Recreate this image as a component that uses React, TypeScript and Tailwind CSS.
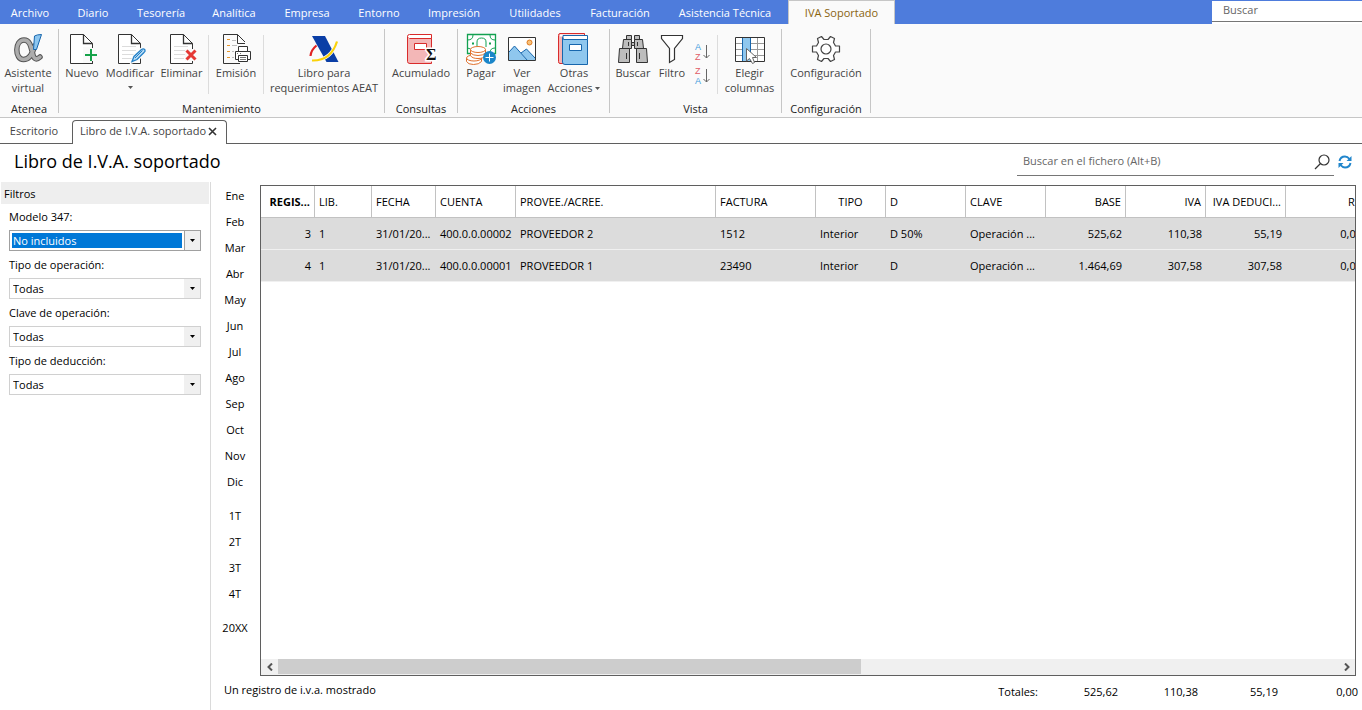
import type { ReactNode } from 'react';

const menuTabs = [
  { label: 'Archivo', width: 'w-[60px]' },
  { label: 'Diario', width: 'w-[66px]' },
  { label: 'Tesorería', width: 'w-[70px]' },
  { label: 'Analítica', width: 'w-[76px]' },
  { label: 'Empresa', width: 'w-[70px]' },
  { label: 'Entorno', width: 'w-[74px]' },
  { label: 'Impresión', width: 'w-[76px]' },
  { label: 'Utilidades', width: 'w-[86px]' },
  { label: 'Facturación', width: 'w-[84px]' },
  { label: 'Asistencia Técnica', width: 'w-[126px]' },
];

const filters = [
  { id: 'modelo', label: 'Modelo 347:', value: 'No incluidos', active: true },
  { id: 'operacion', label: 'Tipo de operación:', value: 'Todas', active: false },
  { id: 'clave', label: 'Clave de operación:', value: 'Todas', active: false },
  { id: 'deduccion', label: 'Tipo de deducción:', value: 'Todas', active: false },
];

const months = ['Ene', 'Feb', 'Mar', 'Abr', 'May', 'Jun', 'Jul', 'Ago', 'Sep', 'Oct', 'Nov', 'Dic'];
const quarters = ['1T', '2T', '3T', '4T'];

const columns = [
  { label: 'REGIS...', col: 'w-[54px]', head: 'text-right font-bold', cell: 'text-right' },
  { label: 'LIB.', col: 'w-[57px]', head: 'text-left font-normal', cell: 'text-left' },
  { label: 'FECHA', col: 'w-[64px]', head: 'text-left font-normal', cell: 'text-left' },
  { label: 'CUENTA', col: 'w-[80px]', head: 'text-left font-normal', cell: 'text-left' },
  { label: 'PROVEE./ACREE.', col: 'w-[200px]', head: 'text-left font-normal', cell: 'text-left' },
  { label: 'FACTURA', col: 'w-[100px]', head: 'text-left font-normal', cell: 'text-left' },
  { label: 'TIPO', col: 'w-[70px]', head: 'text-center font-normal', cell: 'text-left' },
  { label: 'D', col: 'w-[80px]', head: 'text-left font-normal', cell: 'text-left' },
  { label: 'CLAVE', col: 'w-[80px]', head: 'text-left font-normal', cell: 'text-left' },
  { label: 'BASE', col: 'w-[80px]', head: 'text-right font-normal', cell: 'text-right' },
  { label: 'IVA', col: 'w-[80px]', head: 'text-right font-normal', cell: 'text-right' },
  { label: 'IVA DEDUCI...', col: 'w-[80px]', head: 'text-right font-normal', cell: 'text-right' },
  { label: 'RE', col: 'w-[80px]', head: 'text-right font-normal', cell: 'text-right' },
];

const rows = [
  ['3', '1', '31/01/20...', '400.0.0.00002', 'PROVEEDOR 2', '1512', 'Interior', 'D 50%', 'Operación ...', '525,62', '110,38', '55,19', '0,00'],
  ['4', '1', '31/01/20...', '400.0.0.00001', 'PROVEEDOR 1', '23490', 'Interior', 'D', 'Operación ...', '1.464,69', '307,58', '307,58', '0,00'],
];

const totals = ['Totales:', '525,62', '110,38', '55,19', '0,00'];

function Icon({ children }: { children: ReactNode }) {
  return (
    <svg viewBox="0 0 32 32" className="block h-8 w-8 shrink-0 overflow-visible" fill="none" aria-hidden="true">
      {children}
    </svg>
  );
}

function Sheet({ lined = false }: { lined?: boolean }) {
  return (
    <>
      <path d="M17.5 1.5H4.5V30.5H26.5V10.5L17.5 1.5Z" fill="#fff" stroke="#333" />
      <path d="M17.5 1.5V10.5H26.5" stroke="#333" strokeWidth="1.3" />
      {lined && <path d="M8 13.5H22M8 17.5H22M8 21.5H20M8 25.5H18" stroke="#dcdcdc" />}
    </>
  );
}

function AlphaIcon() {
  const loop = 'M22.5 13C20 23 16.500 26.500 11.500 26.500C2.500 26.500 2.500 7 12 7C18 7 19 14 20.500 20C21.500 25 23.500 28 28 24';
  return (
    <Icon>
      <path d={loop} stroke="#555" strokeWidth="5.500" strokeLinecap="round" />
      <path d={loop} stroke="#adadad" strokeWidth="3.500" strokeLinecap="round" />
      <path d="M22.500 3Q25 1.500 29.500 1.500L24.500 16.500H21.500Z" fill="#8cc6f0" stroke="#1766ad" />
    </Icon>
  );
}

function NewIcon() {
  return (
    <Icon>
      <Sheet />
      <path d="M17 14H31V30H17Z" fill="#fafafa" />
      <path d="M5 14H17V30H5Z" fill="#fff" />
      <path d="M26.5 11V15M17 30.5H26.5V28" stroke="#333" />
      <path d="M25 16V28M19 22H31" stroke="#16a34a" strokeWidth="2" />
    </Icon>
  );
}

function EditIcon() {
  return (
    <Icon>
      <Sheet lined />
      <path d="M18 29L20 23L27.500 16Q29.500 15 31 17Q31.500 18.500 30 20L23 27Z" fill="#fff" stroke="#fafafa" strokeWidth="3" />
      <path d="M18 28.500L20 23.500L27.500 16.500Q29.500 15 31 17Q31.500 18.500 30 19.500L23 26.500Z" fill="#b9dcf5" stroke="#2481c8" strokeWidth="1.300" />
      <path d="M21 25L28.500 17.500" stroke="#2481c8" />
    </Icon>
  );
}

function DeleteIcon() {
  return (
    <Icon>
      <Sheet lined />
      <path d="M19 16H31V28H19Z" fill="#fafafa" />
      <path d="M20.500 17.500L29.500 26.500M29.500 17.500L20.500 26.500" stroke="#e53935" strokeWidth="3" />
    </Icon>
  );
}

function PrintIcon() {
  return (
    <Icon>
      <path d="M17.500 1.500H3.500V30.500H20M17.500 1.500V10.500H25M17.500 1.500L25 9" stroke="#333" />
      <path d="M12 7.500H16M12 12.500H17M12 18.500H14M12 24.500H14" stroke="#bbb" />
      <path d="M7 6.500H10M7 12.500H10M7 18.500H10M7 24.500H10" stroke="#e8962a" />
      <path d="M15.500 18.500H30.500V26.500H15.500Z" fill="#fff" stroke="#333" />
      <path d="M18.500 13.500H27.500V18.500H18.500ZM18.500 22.500H27.500V28.500H18.500Z" fill="#fff" stroke="#333" />
      <path d="M20 24.500H26M20 26.500H26M17 20.500H18M20 20.500H21" stroke="#777" />
    </Icon>
  );
}

function AeatIcon() {
  return (
    <Icon>
      <path d="M8.500 12.500Q3 17 2.500 23" stroke="#e02424" strokeWidth="2.200" />
      <path d="M4 3H17L30.500 29H18.500Z" fill="#0a3ea6" />
      <path d="M4 27.500Q23 28 29 8.500" stroke="#fafafa" strokeWidth="3.500" />
      <path d="M4 27.500Q23 28 29 8.500" stroke="#fad20a" strokeWidth="2.200" />
    </Icon>
  );
}

function LedgerIcon() {
  return (
    <Icon>
      <path d="M4.500 1.500H26.500V5.500H4.500Q2.500 5.500 2.500 3.500Q2.500 1.500 4.500 1.500Z" fill="#fff" stroke="#d92b2b" />
      <path d="M2.500 3.500V28.500Q2.500 30.500 5 30.500H26.500V5.500H4.500" fill="#f3b7b7" stroke="#d92b2b" />
      <path d="M9.500 10.500H21.500V16.500H9.500Z" fill="#fff" stroke="#d92b2b" />
      <text x="21" y="27" fontSize="16" fontWeight="700" fontFamily="Liberation Serif, serif" fill="#111" stroke="#fff" strokeWidth="3" paintOrder="stroke">Σ</text>
    </Icon>
  );
}

function PayIcon() {
  return (
    <Icon>
      <path d="M2.500 1.500H30.500V20.500H2.500Z" fill="#fff" stroke="#12a150" strokeWidth="1.300" />
      <path d="M2.500 7Q8 7 8 2M25 2Q25 7 30 7M30 15Q25 15 25 20M2.500 15Q6 15 8 19" stroke="#12a150" />
      <path d="M12 13V9Q12 5 16.500 5T21 9V14" stroke="#12a150" />
      <path d="M7 10.500H9M24 10.500H26" stroke="#12a150" strokeWidth="2" />
      <g fill="#fff" stroke="#e0702c">
        <path d="M1.500 25V28.500Q3 31.500 8.500 31.500T16.500 28.500V25" />
        <ellipse cx="9" cy="25" rx="7.500" ry="3" />
        <path d="M5.500 20V22.500Q7 25.500 13 25.500T20.500 22.500V17" />
        <path d="M5.500 16.500V20Q8 22.500 13 22.500T20.500 20V16.500" />
        <ellipse cx="13" cy="16.500" rx="7.500" ry="3" />
      </g>
      <circle cx="24.500" cy="24.500" r="6.500" fill="#1b86c9" />
      <path d="M24.500 20.500V28.500M20.500 24.500H28.500" stroke="#fff" />
    </Icon>
  );
}

function PictureIcon() {
  return (
    <Icon>
      <path d="M2.500 4.500H29.500V27.500H2.500Z" fill="#fff" />
      <path d="M3 19L8.500 13L21 27H3Z" fill="#8fc7ee" />
      <path d="M15 20L20.500 16L29 25V27H21Z" fill="#8fc7ee" />
      <path d="M3 19L8.500 13L21.500 27.500M15 20L20.500 16L29.500 25.500" stroke="#1766ad" />
      <circle cx="23.500" cy="9.500" r="2.500" fill="#f8c27a" stroke="#e07a1f" />
      <path d="M2.500 4.500H29.500V27.500H2.500Z" stroke="#333" />
    </Icon>
  );
}

function BooksIcon() {
  return (
    <Icon>
      <path d="M2 .500H26.500V4.500H8V30.500H2Q.500 30.500 .500 28.500V2.500Q.500 .500 2 .500Z" fill="#f5b5b5" stroke="#d92b2b" />
      <path d="M2 2.500H26" stroke="#fff" strokeWidth="2" />
      <path d="M5 2.500H29.500V6.500H5Z" fill="#fff" stroke="#1766ad" />
      <path d="M4.500 4.500V29Q4.500 31.500 7 31.500H29.500V6.500H6Q4.500 6 4.500 4.500Z" fill="#8fc7ee" stroke="#1766ad" />
      <path d="M11.500 11.500H23.500V17.500H11.500Z" fill="#fff" stroke="#1766ad" />
    </Icon>
  );
}

function BinocularsIcon() {
  return (
    <Icon>
      <g fill="#bdbdbd" stroke="#333">
        <path d="M9.500 2.500H14.500V6.500H9.500ZM17.500 2.500H22.500V6.500H17.500Z" />
        <path d="M6.500 6.500H14.500V15.500H5.500ZM17.500 6.500H25.500L26.500 15.500H17.500Z" />
        <path d="M14.500 9.500H17.500V12.500H14.500Z" />
        <path d="M2.500 15.500H12.500V29.500H1.500ZM19.500 15.500H29.500L30.500 29.500H19.500Z" />
        <path d="M11.500 9V13M20.500 9V13M9.500 20V26M22.500 20V26" />
      </g>
    </Icon>
  );
}

function FunnelIcon() {
  return (
    <Icon>
      <path d="M5.500 2.500H26.500V5.500L18.500 15.500V26.500L13.500 29.500V15.500L5.500 5.500Z" fill="#fff" stroke="#333" strokeWidth="1.200" />
    </Icon>
  );
}

function SortIcon({ top, bottom, topColor, bottomColor }: { top: string; bottom: string; topColor: string; bottomColor: string }) {
  return (
    <svg viewBox="0 0 16 18" className="block h-[18px] w-4 overflow-visible" fill="none" aria-hidden="true">
      <text x="0" y="7" fontSize="9" fontFamily="Liberation Sans, sans-serif" fill={topColor}>{top}</text>
      <text x="0" y="17" fontSize="9" fontFamily="Liberation Sans, sans-serif" fill={bottomColor}>{bottom}</text>
      <path d="M11.500 2V15M8.500 12L11.500 15L14.500 12" stroke="#666" />
    </svg>
  );
}

function ColumnsIcon() {
  return (
    <Icon>
      <path d="M1.500 4.500H30.500V28.500H1.500Z" fill="#fff" />
      <path d="M2 10.500H30M2 16.500H30M2 22.500H30M23.500 5V28" stroke="#999" />
      <path d="M8.500 4.500H16.500V28.500H8.500Z" fill="#8fc7ee" stroke="#1766ad" />
      <path d="M1.500 4.500H30.500V28.500H1.500Z" stroke="#333" />
      <path d="M12.500 15.500V28L15.500 25.500L18.500 30.500L20.500 29.500L18.500 24.500H22.500Z" fill="#fff" stroke="#666" />
    </Icon>
  );
}

function GearIcon() {
  return (
    <Icon>
      <path d="M11.500 3.500L14 6.500H18L20.500 3.500L24.500 5.500L23.500 9.500L25.500 13H29.500V19H25.500L23.500 22.500L24.500 26.500L20.500 28.500L18 25.500H14L11.500 28.500L7.500 26.500L8.500 22.500L6.500 19H2.500V13H6.500L8.500 9.500L7.500 5.500Z" fill="#fff" stroke="#444" strokeWidth="1.200" strokeLinejoin="round" />
      <circle cx="16" cy="16" r="5" stroke="#444" strokeWidth="1.200" />
    </Icon>
  );
}

function Caret({ className }: { className: string }) {
  return (
    <svg viewBox="0 0 5 3" className={`h-[3px] w-[5px] ${className}`} aria-hidden="true">
      <path d="M0 0H5L2.500 3Z" fill="currentColor" />
    </svg>
  );
}

function Tool({ icon, width, children }: { icon: ReactNode; width: string; children: ReactNode }) {
  return (
    <button type="button" className={`flex shrink-0 flex-col items-center whitespace-nowrap leading-[15px] text-[#444] ${width}`}>
      {icon}
      <span>{children}</span>
    </button>
  );
}

function Group({ title, width, children }: { title: string; width: string; children: ReactNode }) {
  return (
    <section className={`flex shrink-0 flex-col border-r border-[#c6c6c6] ${width}`}>
      <div className="flex h-[72px] shrink-0 items-start pt-1">{children}</div>
      <h2 className="text-center leading-4 text-[#222]">{title}</h2>
    </section>
  );
}

function Divider() {
  return <div className="mt-0.5 h-[59px] w-px shrink-0 bg-[#dcdcdc]" />;
}

function Ribbon() {
  return (
    <div className="flex h-[94px] border-b border-[#c6c6c6] bg-[#fafafa] pt-[5px] pb-1">
      <Group title="Atenea" width="w-[59px]">
        <Tool icon={<AlphaIcon />} width="w-[56px]">Asistente<br />virtual</Tool>
      </Group>
      <Group title="Mantenimiento" width="w-[326px]">
        <Tool icon={<NewIcon />} width="w-[46px]">Nuevo</Tool>
        <Tool icon={<EditIcon />} width="w-[50px]">
          Modificar
          <Caret className="mx-auto mt-1.5 block text-[#555]" />
        </Tool>
        <Tool icon={<DeleteIcon />} width="w-[53px]">Eliminar</Tool>
        <Divider />
        <Tool icon={<PrintIcon />} width="w-[54px]">Emisión</Tool>
        <Divider />
        <Tool icon={<AeatIcon />} width="w-[120px]">Libro para<br />requerimientos AEAT</Tool>
      </Group>
      <Group title="Consultas" width="w-[73px]">
        <Tool icon={<LedgerIcon />} width="w-[72px]">Acumulado</Tool>
      </Group>
      <Group title="Acciones" width="w-[152px]">
        <Tool icon={<PayIcon />} width="w-[46px]">Pagar</Tool>
        <Tool icon={<PictureIcon />} width="w-[36px]">Ver<br />imagen</Tool>
        <Tool icon={<BooksIcon />} width="w-[68px]">
          Otras<br />Acciones <Caret className="mb-0.5 inline-block text-[#555]" />
        </Tool>
      </Group>
      <Group title="Vista" width="w-[172px]">
        <Tool icon={<BinocularsIcon />} width="w-[46px]">Buscar</Tool>
        <Tool icon={<FunnelIcon />} width="w-[32px]">Filtro</Tool>
        <div className="flex w-[29px] flex-col items-center gap-1.5 pt-2.5">
          <button type="button" aria-label="Orden ascendente">
            <SortIcon top="A" bottom="Z" topColor="#3f9bdc" bottomColor="#e05a66" />
          </button>
          <button type="button" aria-label="Orden descendente">
            <SortIcon top="Z" bottom="A" topColor="#e05a66" bottomColor="#3f9bdc" />
          </button>
        </div>
        <Divider />
        <Tool icon={<ColumnsIcon />} width="w-[63px]">Elegir<br />columnas</Tool>
      </Group>
      <Group title="Configuración" width="w-[89px]">
        <Tool icon={<GearIcon />} width="w-[88px]">Configuración</Tool>
      </Group>
    </div>
  );
}

function TopMenu() {
  return (
    <header className="flex h-6 bg-[#4e7cdc] text-white">
      <nav className="flex">
        {menuTabs.map((tab) => (
          <button key={tab.label} type="button" className={`shrink-0 whitespace-nowrap pt-0.5 text-center ${tab.width}`}>
            {tab.label}
          </button>
        ))}
        <button type="button" className="w-[107px] shrink-0 whitespace-nowrap border-x border-t border-[#c6c6c6] bg-[#fafafa] pt-px text-center text-[#8a6410]">
          IVA Soportado
        </button>
      </nav>
      <div className="ml-auto w-[150px] border-t border-[#4e7cdc] bg-white">
        <input
          type="text"
          aria-label="Buscar"
          placeholder="Buscar"
          className="block h-[21px] w-full border-b border-[#767676] bg-white px-[11px] pb-1 text-black outline-none placeholder:text-[#666]"
        />
      </div>
    </header>
  );
}

function DocumentTabs() {
  return (
    <div className="flex h-[26px] pt-0.5 text-[#444]">
      <button type="button" className="w-[72px] border-b border-[#5f5f5f] pr-1">Escritorio</button>
      <div className="flex w-[155px] items-center justify-center gap-0.5 whitespace-nowrap rounded-t border-x border-t border-[#5f5f5f] pr-0.5 pb-0.5">
        <span>Libro de I.V.A. soportado</span>
        <button type="button" aria-label="Cerrar">
          <svg viewBox="0 0 9 9" className="h-[9px] w-[9px]" aria-hidden="true">
            <path d="M1 1L8 8M8 1L1 8" stroke="#333" strokeWidth="1.600" />
          </svg>
        </button>
      </div>
      <div className="flex-1 border-b border-[#5f5f5f]" />
    </div>
  );
}

function TitleBar() {
  return (
    <div className="flex h-[38px] items-start justify-between pl-3.5">
      <h1 className="text-lg leading-[34px] text-black">Libro de I.V.A. soportado</h1>
      <div className="flex h-8 items-center pr-2.5">
        <div className="flex h-8 w-[317px] items-center border-b border-[#767676] pt-1 pr-1 pl-1.5">
          <input
            type="text"
            aria-label="Buscar en el fichero"
            placeholder="Buscar en el fichero (Alt+B)"
            className="min-w-0 flex-1 bg-transparent outline-none placeholder:text-[#666]"
          />
          <svg viewBox="0 0 16 16" className="h-4 w-4" fill="none" stroke="#333" strokeWidth="1.200" aria-hidden="true">
            <circle cx="10" cy="6" r="5" />
            <path d="M6.500 9.500L1 15" />
          </svg>
        </div>
        <button type="button" aria-label="Actualizar" className="ml-1 pt-1">
          <svg viewBox="0 0 14 14" className="h-3.5 w-3.5" fill="none" stroke="#2186cc" strokeWidth="2" aria-hidden="true">
            <path d="M1.500 6Q2.500 1.500 7 1.500Q9.500 1.500 11.500 4M12.500 8Q11.500 12.500 7 12.500Q4.500 12.500 2.500 10" />
            <path d="M13.500 1V6H8.500ZM.500 13V8H5.500Z" fill="#2186cc" stroke="none" />
          </svg>
        </button>
      </div>
    </div>
  );
}

function FilterPanel() {
  return (
    <aside className="w-[211px] shrink-0 border-r border-[#dadada] pl-px">
      <h2 className="mr-px h-[22px] bg-[#eeeeee] pl-[3px] leading-6">Filtros</h2>
      <form className="flex flex-col gap-px pr-[9px] pl-2">
        {filters.map((filter) => (
          <div key={filter.id}>
            <label htmlFor={filter.id} className="block h-[26px] leading-[26px]">{filter.label}</label>
            <div className={`flex h-[21px] border bg-white ${filter.active ? 'border-[#a0a0a0]' : 'border-[#d0d0d0]'}`}>
              <select
                id={filter.id}
                defaultValue={filter.value}
                className={`m-0.5 min-w-0 flex-1 appearance-none pl-px leading-[15px] outline-none ${filter.active ? 'bg-[#0078d7] text-white' : 'bg-white'}`}
              >
                <option>{filter.value}</option>
              </select>
              <span className={`flex w-4 items-center justify-center bg-[#f0f0f0] ${filter.active ? 'border-l border-[#a0a0a0]' : ''}`}>
                <Caret className="text-black" />
              </span>
            </div>
          </div>
        ))}
      </form>
    </aside>
  );
}

function PeriodList() {
  return (
    <nav className="flex w-12 shrink-0 flex-col gap-2 pt-px">
      {[months, quarters, ['20XX']].map((group) => (
        <div key={group[0]} className="flex flex-col">
          {group.map((period) => (
            <button key={period} type="button" className="h-[26px] text-center">{period}</button>
          ))}
        </div>
      ))}
    </nav>
  );
}

function Grid() {
  return (
    <div className="mt-[3px] mr-1.5 ml-px flex min-w-0 flex-1 flex-col border border-[#5f5f5f]">
      <div className="flex-1 overflow-hidden">
        <table className="w-[1105px] table-fixed border-separate border-spacing-0 whitespace-nowrap">
          <colgroup>
            {columns.map((column) => (
              <col key={column.label} className={column.col} />
            ))}
          </colgroup>
          <thead>
            <tr className="h-8">
              {columns.map((column) => (
                <th key={column.label} scope="col" className={`border-r border-b border-[#c2c2c2] px-1 pt-0.5 ${column.head}`}>
                  {column.label}
                </th>
              ))}
            </tr>
          </thead>
          <tbody>
            {rows.map((row) => (
              <tr key={row[0]} className="h-8 bg-[#dcdcdc]">
                {row.map((value, i) => (
                  <td key={i} className={`border-b border-[#f0f0f0] px-1 pt-0.5 ${columns[i].cell}`}>{value}</td>
                ))}
              </tr>
            ))}
          </tbody>
        </table>
      </div>
      <div className="flex h-4 bg-[#f0f0f0] text-[#555]">
        <button type="button" aria-label="Desplazar a la izquierda" className="flex w-[17px] items-center justify-center">
          <svg viewBox="0 0 6 8" className="h-2 w-1.5" fill="none" aria-hidden="true">
            <path d="M5 .500L1.500 4L5 7.500" stroke="currentColor" strokeWidth="2" />
          </svg>
        </button>
        <div className="flex-1">
          <div className="h-[15px] w-[55%] bg-[#cdcdcd]" />
        </div>
        <button type="button" aria-label="Desplazar a la derecha" className="flex w-[17px] items-center justify-center">
          <svg viewBox="0 0 6 8" className="h-2 w-1.5" fill="none" aria-hidden="true">
            <path d="M1 .500L4.500 4L1 7.500" stroke="currentColor" strokeWidth="2" />
          </svg>
        </button>
      </div>
    </div>
  );
}

export default function App() {
  return (
    <div className="flex min-h-screen flex-col overflow-hidden bg-white font-['Open_Sans','Noto_Sans',sans-serif] text-[11px] text-black">
      <TopMenu />
      <Ribbon />
      <DocumentTabs />
      <TitleBar />
      <main className="flex flex-1">
        <FilterPanel />
        <div className="flex min-w-0 flex-1 flex-col">
          <div className="flex flex-1">
            <PeriodList />
            <Grid />
          </div>
          <footer className="flex h-[34px] justify-between pl-[13px]">
            <p className="leading-7">Un registro de i.v.a. mostrado</p>
            <div className="flex text-right leading-8">
              {totals.map((total) => (
                <span key={total} className="w-20 pr-1">{total}</span>
              ))}
            </div>
          </footer>
        </div>
      </main>
    </div>
  );
}
